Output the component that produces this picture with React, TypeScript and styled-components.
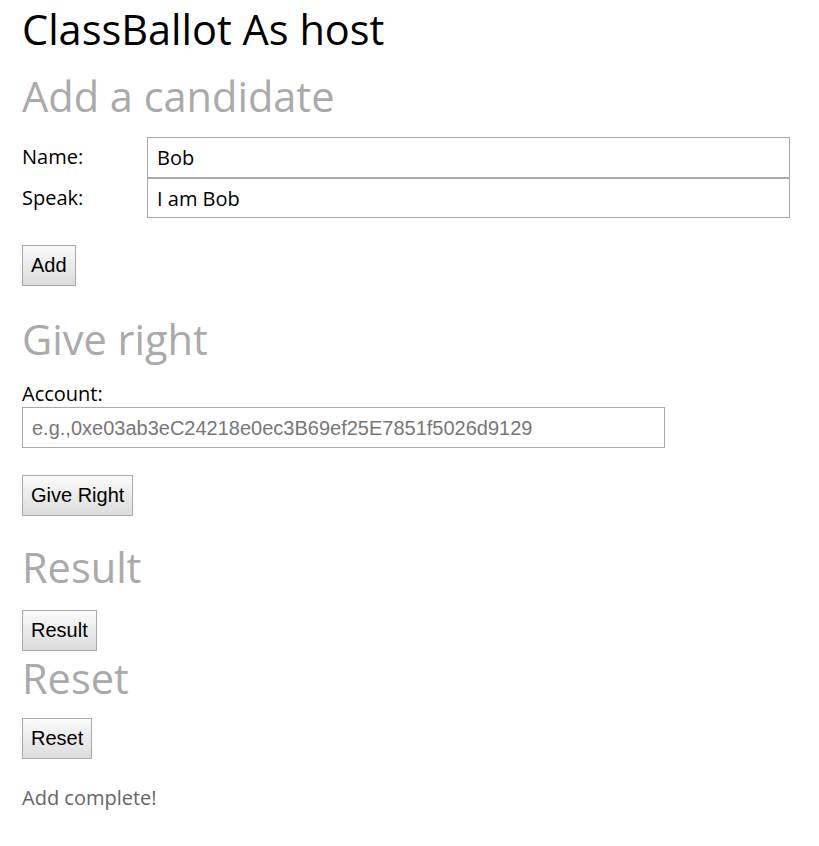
import React from "react";
import styled, { createGlobalStyle } from "styled-components";

const Global = createGlobalStyle`
  html, body { margin: 0; padding: 0; background: #fff; }
  body { font-family: "Open Sans", sans-serif; color: #000; }
`;

const Page = styled.div`
  padding: 5px 22px 20px 22px;
  width: 768px;
`;

const Title = styled.h1`
  margin: 0;
  font-family: "Open Sans", sans-serif;
  font-weight: 400;
  font-size: 41.5px;
  line-height: 48px;
  color: #000;
`;

const SectionTitle = styled.h2<{ $mt: number }>`
  margin: ${(p) => p.$mt}px 0 0 0;
  font-family: "Open Sans", sans-serif;
  font-weight: 400;
  font-size: 41.5px;
  line-height: 48px;
  color: #aaa;
`;

const FormGrid = styled.div`
  display: grid;
  grid-template-columns: 125px 643px;
  margin-top: 17px;
`;

const Label = styled.label`
  font-size: 20px;
  line-height: 40px;
  color: #000;
`;

const TextInput = styled.input<{ $w?: number; $h?: number }>`
  box-sizing: border-box;
  width: ${(p) => (p.$w ? `${p.$w}px` : "100%")};
  height: ${(p) => p.$h ?? 41}px;
  margin: 0;
  padding: 0 9px;
  border: 1px solid #aaa;
  font-family: "Open Sans", sans-serif;
  font-size: 20px;
  color: #000;
  background: #fff;
  outline: none;
  &::placeholder {
    font-family: "Liberation Sans", Arial, sans-serif;
    color: #777;
    font-size: 20px;
  }
`;

const Button = styled.button<{ $mt: number }>`
  display: block;
  margin-top: ${(p) => p.$mt}px;
  height: 41px;
  padding: 0 8px;
  border: 1px solid #aaa;
  border-radius: 0;
  background: linear-gradient(#fafafa, #dcdcdc);
  font-family: "Liberation Sans", Arial, sans-serif;
  font-size: 20px;
  color: #000;
`;

const SmallLabel = styled.div`
  font-size: 20px;
  line-height: 26px;
  margin-top: 18px;
`;

const Status = styled.p`
  margin: 26px 0 0 0;
  font-size: 20px;
  line-height: 26px;
  color: #666;
`;

export default function App() {
  return (
    <>
      <Global />
      <Page>
        <Title>ClassBallot As host</Title>
        <SectionTitle $mt={19}>Add a candidate</SectionTitle>
        <FormGrid>
          <Label>Name:</Label>
          <TextInput $h={41} defaultValue="Bob" />
          <Label>Speak:</Label>
          <TextInput $h={40} defaultValue="I am Bob" />
        </FormGrid>
        <Button $mt={27}>Add</Button>
        <SectionTitle $mt={29}>Give right</SectionTitle>
        <SmallLabel>Account:</SmallLabel>
        <TextInput $w={643} placeholder="e.g.,0xe03ab3eC24218e0ec3B69ef25E7851f5026d9129" />
        <Button $mt={27}>Give Right</Button>
        <SectionTitle $mt={27}>Result</SectionTitle>
        <Button $mt={19}>Result</Button>
        <SectionTitle $mt={3}>Reset</SectionTitle>
        <Button $mt={16}>Reset</Button>
        <Status>Add complete!</Status>
      </Page>
    </>
  );
}
